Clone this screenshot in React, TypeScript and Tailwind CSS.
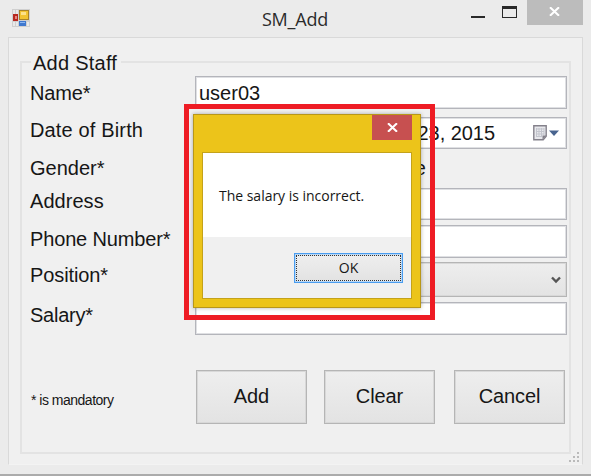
import React from "react";

const fieldClass =
  "box-border w-[372px] shrink-0 border border-[#b4b5bb] bg-white shadow-[inset_0_0_0_1px_#dfe0e3]";

function Row({ label, tracking, height, children }: {
  label: string;
  tracking: string;
  height: string;
  children?: React.ReactNode;
}) {
  return (
    <div className={`flex items-center ${height}`}>
      <span className={`w-[165px] shrink-0 whitespace-nowrap leading-6 ${tracking}`}>{label}</span>
      {children}
    </div>
  );
}

function ActionButton({ children }: { children: React.ReactNode }) {
  return (
    <button className="flex h-[54px] w-[111px] items-center justify-center border border-[#b5b5b5] bg-linear-to-b from-[#eeeeee] to-[#e3e3e3] pb-0.5 text-[20px] leading-6 tracking-[-0.1px] shadow-[inset_0_0_0_1px_#d8d8d8]">
      {children}
    </button>
  );
}

function AppIcon() {
  return (
    <svg width="18" height="18" viewBox="0 0 18 18">
      <rect width="18" height="18" fill="#cfcfcf" />
      <path d="M1 1h5v4H1zM1 13h5v4H1zM15 13h2v4h-2z" fill="#e9e9e9" />
      <path d="M3 1h1v4H3zM3 13h1v4H3z" fill="#cfcfcf" />
      <rect x="7" y="1" width="10" height="10" fill="#a8832b" />
      <rect x="8" y="2" width="8" height="8" fill="#f1c332" />
      <path d="M9 3h5v3H9z" fill="#fce18b" />
      <rect x="1" y="5" width="5" height="7" fill="#b72920" />
      <rect x="3" y="7" width="2" height="3" fill="#e9877e" />
      <rect x="7" y="12" width="7" height="5" fill="#3f78cf" />
      <path d="M8 13h5v1H8z" fill="#8db8f2" />
    </svg>
  );
}

function Cross({ className }: { className?: string }) {
  return (
    <svg className={className} width="11" height="9" viewBox="0 0 11 9" fill="none" stroke="white" strokeWidth="2">
      <path d="M1 0.2 10 8.8M10 0.2 1 8.8" />
    </svg>
  );
}

function MessageDialog() {
  return (
    <div className="absolute left-[184px] top-[104px] h-[216px] w-[251px] border-5 border-[#ee1c24]">
      <div className="ml-1 mt-[5px] flex h-[194px] w-[228px] flex-col border border-[#b8971a] bg-[#ecc41a] shadow-[0_0_4px_rgba(0,0,0,0.3)]">
        <div className="flex h-[37px] items-start justify-end pr-2">
          <button className="flex h-[25px] w-10 items-center justify-center bg-[#c75050]">
            <Cross />
          </button>
        </div>
        <div className="ml-2 flex h-[147px] w-[210px] flex-col border border-[#c4a21a] bg-[#f0f0f0] font-['Open_Sans',sans-serif] text-[14px]">
          <div className="flex h-[84px] items-center bg-white pl-4">
            <span className="whitespace-nowrap tracking-[-0.02px]">The salary is incorrect.</span>
          </div>
          <div className="flex justify-end pr-2 pt-4">
            <button className="h-[30px] w-[109px] border border-[#4a9df0] bg-[#b9d8f6] p-px">
              <span className="flex h-full items-center justify-center border border-dotted border-[#333] bg-linear-to-b from-[#eeeeee] to-[#e3e3e3] leading-5">
                OK
              </span>
            </button>
          </div>
        </div>
      </div>
    </div>
  );
}

export default function App() {
  return (
    <div className="relative h-[476px] w-[591px] overflow-hidden border-b-2 border-[#ababab] bg-[#ebebeb] font-['Liberation_Sans',Arial,sans-serif] text-[20px] text-[#161616]">
      <header className="flex h-[37px]">
        <div className="w-[190px] pl-3 pt-[9px]"><AppIcon /></div>
        <h1 className="w-[210px] pt-[7px] text-center font-['Open_Sans',sans-serif] text-[18px] leading-6 tracking-[-0.2px] text-[#2b2b2b]">SM_Add</h1>
        <div className="flex flex-1">
          <div className="ml-[71px] mt-4 h-0.5 w-[14px] bg-[#292929]" />
          <div className="ml-[17px] mt-1.5 h-3 w-[15px] border border-t-3 border-[#292929]" />
          <button className="ml-[10px] flex h-[25px] w-14 items-center justify-center bg-[#bcbcbc] pr-px pb-0.5">
            <Cross />
          </button>
        </div>
      </header>

      <main className="relative ml-2 h-[428px] w-[575px] border border-[#d9d9d9] border-b-[#f3f3f3] bg-[#f0f0f0] pl-[11px] pt-[11px]">
        <fieldset className="h-[405px] w-[551px] border-2 border-[#e3e3e3] pl-2">
          <legend className="ml-px h-[26px] px-[2px] pr-1 leading-[28px] tracking-[0.25px]">Add Staff</legend>
          <div className="mt-px">
            <Row label="Name*" tracking="tracking-[-0.15px]" height="h-[33px]">
              <div className={`${fieldClass} flex h-[33px] items-center pl-[3px] leading-6`}>user03</div>
            </Row>
            <Row label="Date of Birth" tracking="tracking-[0.15px] pb-1.5" height="mt-2 h-[32px]">
              <div className={`${fieldClass} flex h-[32px] items-center justify-end pr-[7px] leading-6`}>
                <span className="mr-[38px] whitespace-nowrap tracking-[-0.05px]">June 23, 2015</span>
                <svg width="26" height="16" viewBox="0 0 26 16">
                  <path d="M.8.8h12.4v10.4l-3 3.5H.8z" fill="#e8e8ec" stroke="#84818b" strokeWidth="1.4" />
                  <path d="M3 4h8M3 6.5h8M3 9h8M3 11.5h6M3.5 3v9M6 3v9M8.500 3v9M11 3v7" stroke="#c3c5cd" strokeWidth="1" />
                  <path d="M9.5 14.5v-4h4" fill="#84818b" />
                  <path d="M16 5.500h10L21 11z" fill="#48648f" />
                </svg>
              </div>
            </Row>
            <Row label="Gender*" tracking="tracking-[0px]" height="h-[39px] pb-0.5">
              <span className="w-[231px] text-right leading-6">Female</span>
            </Row>
            <Row label="Address" tracking="tracking-[0.05px] pb-1.5" height="h-[32px]">
              <div className={`${fieldClass} h-[32px]`} />
            </Row>
            <Row label="Phone Number*" tracking="tracking-[-0.15px] pb-1.5" height="mt-[5px] h-[33px]">
              <div className={`${fieldClass} h-[33px]`} />
            </Row>
            <Row label="Position*" tracking="tracking-[-0.1px] pb-[9px]" height="mt-1 h-[35px]">
              <div className="flex h-[35px] w-[372px] shrink-0 items-center justify-end border border-[#b5b5b5] bg-linear-to-b from-[#eeeeee] to-[#e3e3e3] pr-[5px] shadow-[inset_0_0_0_1px_#d8d8d8]">
                <svg width="10" height="8" viewBox="0 0 10 8" fill="none" stroke="#555" strokeWidth="2.4">
                  <path d="m1 1.5 4 4 4-4" />
                </svg>
              </div>
            </Row>
            <Row label="Salary*" tracking="tracking-[-0.25px] pb-2" height="mt-[5px] h-[33px]">
              <div className={`${fieldClass} h-[33px]`} />
            </Row>
            <div className="mt-[35px] flex h-[54px]">
              <span className="w-[166px] whitespace-nowrap pl-px pt-[22px] text-[14px] leading-4 tracking-[-0.5px]">* is mandatory</span>
              <ActionButton>Add</ActionButton>
              <span className="w-[17px]" />
              <ActionButton>Clear</ActionButton>
              <span className="w-[19px]" />
              <ActionButton>Cancel</ActionButton>
            </div>
          </div>
        </fieldset>
        <svg className="absolute bottom-px right-0.5" width="11" height="11" viewBox="0 0 11 11" fill="#bababa">
          <path d="M8 0h2v2H8zM8 4h2v2H8zM8 8h2v2H8zM4 4h2v2H4zM4 8h2v2H4zM0 8h2v2H0z" />
        </svg>
      </main>
      <MessageDialog />
    </div>
  );
}
